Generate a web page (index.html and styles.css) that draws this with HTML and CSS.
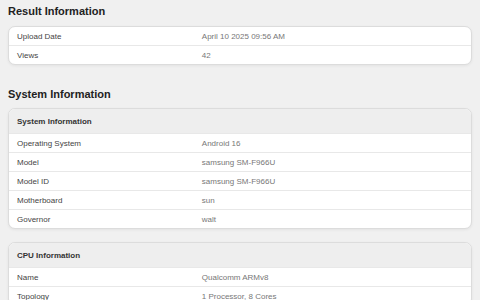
FILE: index.html
```html
<!DOCTYPE html>
<html lang="en">
<head>
  <meta charset="UTF-8">
  <meta name="viewport" content="width=device-width, initial-scale=1.0">
  <title>Result</title>
  <link rel="stylesheet" href="styles.css">
</head>
<body>
  <main>
    <section class="section">
      <h2>Result Information</h2>
      <div class="card">
        <table class="info">
          <tr><td class="key">Upload Date</td><td class="val">April 10 2025 09:56 AM</td></tr>
          <tr><td class="key">Views</td><td class="val">42</td></tr>
        </table>
      </div>
    </section>

    <section class="section">
      <h2>System Information</h2>
      <div class="cards">
        <div class="card">
          <table class="info">
            <tr class="head"><th colspan="2">System Information</th></tr>
            <tr><td class="key">Operating System</td><td class="val">Android 16</td></tr>
            <tr><td class="key">Model</td><td class="val">samsung SM-F966U</td></tr>
            <tr><td class="key">Model ID</td><td class="val">samsung SM-F966U</td></tr>
            <tr><td class="key">Motherboard</td><td class="val">sun</td></tr>
            <tr><td class="key">Governor</td><td class="val">walt</td></tr>
          </table>
        </div>
        <div class="card">
          <table class="info">
            <tr class="head"><th colspan="2">CPU Information</th></tr>
            <tr><td class="key">Name</td><td class="val">Qualcomm ARMv8</td></tr>
            <tr><td class="key">Topology</td><td class="val">1 Processor, 8 Cores</td></tr>
          </table>
        </div>
      </div>
    </section>
  </main>
</body>
</html>
```
FILE: styles.css
```css
body {
  font-family: 'Liberation Sans', Arial, sans-serif;
  margin: 0;
  padding: 4px 8px 0 8px;
  background: #f0f0f0;
  color: #333;
}
h2 { font-size: 11px; line-height: 14px; margin: 0 0 8px; color: #222; }
.section + .section { margin-top: 22px; }
.section + .section h2 { margin-bottom: 7px; }
.cards { display: flex; flex-direction: column; gap: 13px; }
.card {
  background: #fff;
  border: 1px solid #dcdcdc;
  border-radius: 7px;
  box-shadow: 0 1px 3px rgba(0, 0, 0, 0.06);
  overflow: hidden;
}
.info { width: 100%; border-collapse: collapse; font-size: 8px; }
.info td { height: 18px; padding: 0 8px; border-top: 1px solid #e8e8e8; }
.info tr:first-child td { border-top: none; }
.info .key { width: 40%; color: #444; }
.info .val { color: #777; }
.head th {
  height: 24px;
  padding: 0 8px;
  text-align: left;
  background: #eeeeee;
  color: #333;
  font-size: 8px;
  font-weight: bold;
}
```
